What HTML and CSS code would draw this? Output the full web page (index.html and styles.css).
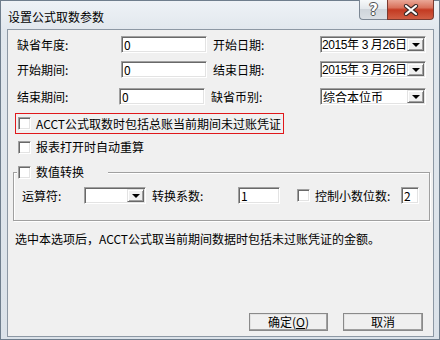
FILE: index.html
```html
<!DOCTYPE html>
<html lang="zh-CN">
<head>
<meta charset="utf-8">
<title>设置公式取数参数</title>
<link rel="stylesheet" href="styles.css">
</head>
<body>
<div class="window">
  <div class="titlebar">
    <span class="title">设置公式取数参数</span>
    <div class="caption-btns">
      <span class="cbtn help">?</span>
      <span class="cbtn close"><svg width="16" height="12" viewBox="0 0 16 12"><path d="M3 2 L13 10 M13 2 L3 10" stroke="#3b2a28" stroke-width="4.2" stroke-linecap="round"/><path d="M3 2 L13 10 M13 2 L3 10" stroke="#ffffff" stroke-width="2.2" stroke-linecap="round"/></svg></span>
    </div>
  </div>
  <div class="client">
    <div class="row r1">
      <span class="lbl lbl-a">缺省年度:</span>
      <span class="edit w-year">0</span>
      <span class="lbl lbl-b">开始日期:</span>
      <span class="combo w-date"><span class="val date">2015年 3 月26日</span><span class="drop"></span></span>
    </div>
    <div class="row r2">
      <span class="lbl lbl-a">开始期间:</span>
      <span class="edit w-year">0</span>
      <span class="lbl lbl-b">结束日期:</span>
      <span class="combo w-date"><span class="val date">2015年 3 月26日</span><span class="drop"></span></span>
    </div>
    <div class="row r3">
      <span class="lbl lbl-a tight">结束期间:</span>
      <span class="edit w-year">0</span>
      <span class="lbl lbl-b wide">缺省币别:</span>
      <span class="combo w-date"><span class="val">综合本位币</span><span class="drop"></span></span>
    </div>
    <div class="highlight">
      <span class="chk"></span>
      <span class="chk-text">ACCT公式取数时包括总账当前期间未过账凭证</span>
    </div>
    <div class="check-row">
      <span class="chk"></span>
      <span class="chk-text">报表打开时自动重算</span>
    </div>
    <fieldset class="group">
      <legend class="group-title"><span class="chk"></span><span class="chk-text">数值转换</span></legend>
      <div class="group-row">
        <span class="lbl op-lbl">运算符:</span>
        <span class="combo w-op"><span class="val"></span><span class="drop"></span></span>
        <span class="lbl factor-lbl">转换系数:</span>
        <span class="edit w-factor">1</span>
        <span class="chk dec-chk"></span>
        <span class="lbl dec-lbl">控制小数位数:</span>
        <span class="edit w-dec">2</span>
      </div>
    </fieldset>
    <p class="desc">选中本选项后，ACCT公式取当前期间数据时包括未过账凭证的金额。</p>
    <div class="buttons">
      <span class="btn ok">确定(<u>O</u>)</span>
      <span class="btn cancel">取消</span>
    </div>
  </div>
</div>
</body>
</html>
```
FILE: styles.css
```css
* { box-sizing: border-box; }
html, body { margin: 0; padding: 0; }
body {
  width: 440px;
  height: 340px;
  font-family: "Noto Sans CJK SC", "Noto Sans", sans-serif;
  font-size: 12px;
  line-height: 14px;
  color: #000;
  background: #dfe5eb;
}
.window {
  width: 440px;
  height: 340px;
  border: 1px solid #6f7e8d;
  padding: 0 5px 2px 6px;
  background: linear-gradient(#eef2f6 0px, #e1e7ed 30px, #dbe2e9 100%);
  display: flex;
  flex-direction: column;
}
.titlebar {
  height: 28px;
  display: flex;
  align-items: flex-start;
  justify-content: space-between;
  flex: none;
}
.title {
  padding: 9px 0 0 1px;
  color: #000;
}
.caption-btns {
  display: flex;
  margin-top: -1px;
}
.cbtn {
  height: 20px;
  display: flex;
  align-items: center;
  justify-content: center;
}
.help {
  width: 28px;
  border: 1px solid #7c8794;
  border-top: none;
  border-right: none;
  border-radius: 0 0 0 4px;
  background: linear-gradient(#f7f9fa 0%, #e4e8ec 45%, #cfd5db 50%, #dadfe4 100%);
  color: #fff;
  font-family: "DejaVu Sans", sans-serif;
  font-weight: bold;
  font-size: 15px;
  text-shadow: 0 0 1px #444, 1px 0 0 #555, -1px 0 0 #555, 0 1px 0 #555, 0 -1px 0 #555;
}
.close {
  width: 47px;
  border: 1px solid #7a3a30;
  border-top: none;
  border-radius: 0 0 4px 0;
  background: linear-gradient(#eaa898 0%, #d9725c 40%, #c33a22 52%, #d05e44 100%);
}
.client {
  flex: 1;
  border: 1px solid #8d98a4;
  background: #f0f0f0;
  padding: 6px 3px 5px 5px;
  display: flex;
  flex-direction: column;
}
.row {
  display: flex;
  align-items: center;
  height: 17px;
}
.r2 { margin-top: 8px; }
.r3 { margin-top: 10px; }
.lbl { white-space: nowrap; }
.lbl-a { width: 104px; margin-left: 4px; }
.lbl-a.tight { width: 102px; }
.lbl-b { width: 107px; margin-left: 6px; }
.lbl-b.wide { width: 109px; }
.edit, .combo {
  height: 17px;
  background: #fff;
  border: 1px solid;
  border-color: #a0a0a0 #ffffff #ffffff #a0a0a0;
  box-shadow: inset 1px 1px 0 #696969, inset -1px -1px 0 #e3e3e3;
  padding: 1px 2px 0 2px;
  white-space: nowrap;
  font-size: 12px;
  line-height: 14px;
}
.w-year { width: 86px; }
.w-date { width: 106px; }
.combo {
  display: flex;
  align-items: stretch;
  padding: 1px 1px 1px 1px;
}
.combo .val {
  flex: 1;
  display: flex;
  align-items: center;
  line-height: 14px;
  padding-left: 1px;
  white-space: nowrap;
}
.combo .val.date {
  font-family: "Liberation Sans", "Noto Sans CJK SC", sans-serif;
  letter-spacing: -0.4px;
  padding-left: 0;
}
.drop {
  width: 17px;
  flex: none;
  background: #f0f0f0;
  border: 1px solid;
  border-color: #e3e3e3 #696969 #696969 #e3e3e3;
  box-shadow: inset 1px 1px 0 #fff, inset -1px -1px 0 #a0a0a0;
  display: flex;
  align-items: center;
  justify-content: center;
}
.drop::after {
  content: "";
  width: 0;
  height: 0;
  border-top: 4px solid #000;
  border-left: 4px solid transparent;
  border-right: 4px solid transparent;
}
.chk {
  width: 13px;
  height: 13px;
  flex: none;
  display: inline-block;
  background: #fff;
  border: 1px solid;
  border-color: #a0a0a0 #ffffff #ffffff #a0a0a0;
  box-shadow: inset 1px 1px 0 #696969, inset -1px -1px 0 #e3e3e3;
}
.chk-text { white-space: nowrap; }
.highlight {
  margin: 8px 0 0 2px;
  width: 269px;
  height: 21px;
  border: 1px solid #e0181b;
  display: flex;
  align-items: center;
  gap: 5px;
  padding-left: 2px;
}
.check-row {
  margin: 6px 0 0 5px;
  display: flex;
  align-items: center;
  gap: 5px;
  height: 14px;
}
.group {
  margin: 11px 0 0 0;
  width: 417px;
  padding: 0;
  border: 1px solid #a0a0a0;
  box-shadow: inset 1px 1px 0 #fff, 1px 1px 0 #fff;
  min-width: 0;
}
.group-title {
  margin-left: 3px;
  padding: 0 0 0 1px;
  width: 91px;
  height: 14px;
  display: flex;
  align-items: center;
  gap: 5px;
  background: #f0f0f0;
}
.group-row {
  display: flex;
  align-items: center;
  height: 17px;
  margin: 8px 0 16px 0;
}
.op-lbl { width: 62px; margin-left: 8px; }
.w-op { width: 62px; }
.factor-lbl { width: 86px; margin-left: 6px; }
.w-factor { width: 42px; }
.dec-chk { margin-left: 17px; }
.dec-lbl { width: 86px; margin-left: 5px; }
.w-dec { width: 18px; }
.desc {
  margin: 11px 0 0 2px;
  white-space: nowrap;
}
.buttons {
  margin-top: auto;
  display: flex;
  justify-content: flex-end;
  gap: 15px;
  padding-right: 7px;
}
.btn {
  height: 18px;
  display: flex;
  align-items: center;
  justify-content: center;
  background: #f0f0f0;
  border: 1px solid;
  border-color: #ffffff #696969 #696969 #ffffff;
  box-shadow: inset -1px -1px 0 #a0a0a0, inset 1px 1px 0 #e3e3e3;
  outline: 1px solid #8a8a8a;
  outline-offset: -1px;
}
.ok { width: 79px; }
.cancel { width: 80px; }
.btn u { text-decoration: underline; }
```
